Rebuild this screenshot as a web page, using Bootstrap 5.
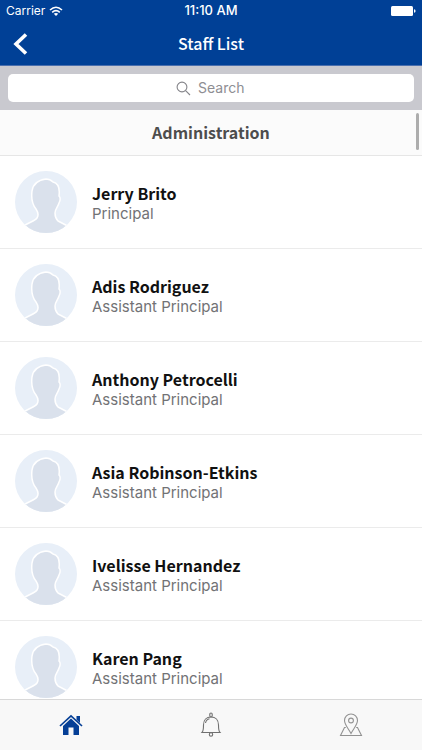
<!DOCTYPE html>
<html lang="en">
<head>
<meta charset="utf-8">
<meta name="viewport" content="width=device-width, initial-scale=1">
<title>Staff List</title>
<link rel="stylesheet" href="https://cdn.jsdelivr.net/npm/bootstrap@5.3.0/dist/css/bootstrap.min.css">
<style>
body { font-family: Inter, "Liberation Sans", sans-serif; color: #111; background: #fff; }
.humanist { font-family: "Noto Sans CJK SC", "Noto Sans", sans-serif; }
.app-top { background: #004096; border-bottom: 1px solid #4a6fae; }
.status-bar { height: 22px; font-size: 12px; padding: 0 6px; }
.status-time { font-size: 13px; font-weight: 500; }
.title-bar { height: 43px; padding: 0 12px 2px; }
.title-bar h1 { font-size: 16px; line-height: 24px; font-weight: 500; }
.back-btn { width: 16px; line-height: 0; }
.search-bar { background: #c9c9cf; padding: 8px; height: 44px; }
.search-box { height: 28px; border-radius: 5px; color: #8e8e93; gap: 7px; }
.search-box input { width: 48px; font-size: 14px; line-height: 20px; outline: 0; color: #333; -webkit-appearance: none; appearance: none; }
.search-box input::-webkit-search-cancel-button { display: none; }
.search-box input::placeholder { color: #8e8e93; opacity: 1; }
.staff-scroll { min-height: 0; scrollbar-width: none; }
.staff-scroll::-webkit-scrollbar { display: none; }
.group-title { height: 46px; padding-bottom: 2px; font-size: 16px; line-height: 24px; font-weight: 700; color: #4d4d4d; background: #fbfbfb; border-bottom: 1px solid #e6e6e6; }
.staff-row { height: 93px; padding: 0 15px; gap: 15px; border-bottom: 1px solid #ebebeb; }
.staff-row h3 { font-size: 16px; line-height: 24px; font-weight: 700; }
.staff-row p { font-size: 15px; line-height: 18px; color: #727275; font-weight: 400; }
.scroll-thumb { top: 3px; right: 3px; width: 3px; height: 37px; background: #adadad; border-radius: 2px; }
.tab-bar { height: 51px; background: #f8f8f8; border-top: 1px solid #d8d8d8; }
</style>
<script src="https://cdn.jsdelivr.net/npm/bootstrap@5.3.0/dist/js/bootstrap.bundle.min.js"></script>
</head>
<body>
<svg class="d-none" aria-hidden="true">
  <symbol id="person" viewBox="0 0 62 62">
    <rect width="62" height="62" fill="#e8eff8"/>
    <path d="M6 57C12 52 20 50 22 47C24 44 23 41 21 38C17 33 16 28 17 20C18 13 24 9 31 8C34 8 36 9 38 11C43 12 45 17 44 25C46 27 45 30 44 32C43 36 40 38 40 42C40 46 41 48 43 50C47 52 51 54 56 57V66H6Z" fill="#dae1ec" stroke="#fff" stroke-width="1.500"/>
  </symbol>
</svg>
<div class="vh-100 d-flex flex-column">
  <header class="app-top text-white flex-shrink-0">
    <div class="status-bar row g-0 align-items-center">
      <div class="col d-flex align-items-center gap-1">
        <span>Carrier</span>
        <svg width="14" height="11" viewBox="0 0 14 11" fill="none" stroke="#fff" stroke-width="1.600" aria-hidden="true"><path d="M1 4Q7-1.500 13 4M3.200 6.400Q7 3 10.800 6.400"/><path d="M4.800 7.800Q7 6 9.200 7.800L7 10Z" fill="#fff" stroke="none"/></svg>
      </div>
      <div class="col-auto status-time">11:10 AM</div>
      <div class="col d-flex justify-content-end">
        <svg width="25" height="10" viewBox="0 0 25 10" fill="#fff" aria-hidden="true"><rect width="22" height="10" rx="1.500"/><path d="M23 3.300q1.600.2 1.600 1.700T23 6.700Z"/></svg>
      </div>
    </div>
    <div class="title-bar row g-0 align-items-center">
      <div class="col">
        <button class="back-btn btn p-0 border-0 text-white" type="button" aria-label="Back">
          <svg width="15" height="22" viewBox="0 0 15 22" fill="none" stroke="#fff" stroke-width="3.600"><path d="M13 1.500L3 11L13 20.500"/></svg>
        </button>
      </div>
      <h1 class="col-auto humanist mb-0">Staff List</h1>
      <div class="col"></div>
    </div>
  </header>
  <div class="search-bar flex-shrink-0">
    <label class="search-box bg-white d-flex align-items-center justify-content-center">
      <svg width="15" height="15" viewBox="0 0 15 15" fill="none" stroke="#85858a" stroke-width="1.100" aria-hidden="true"><circle cx="6" cy="6" r="4.900"/><path d="M9.600 9.600L14 14"/></svg>
      <input class="border-0 p-0 bg-transparent" type="search" placeholder="Search" aria-label="Search">
    </label>
  </div>
  <div class="position-relative flex-fill d-flex staff-scroll">
    <main class="staff-scroll flex-fill overflow-auto">
      <h2 class="group-title humanist mb-0 d-flex align-items-center justify-content-center">Administration</h2>
      <ul class="list-unstyled mb-0">
        <li class="staff-row d-flex align-items-center"><svg class="rounded-circle" width="62" height="62" aria-hidden="true"><use href="#person"/></svg><div><h3 class="humanist mb-0">Jerry Brito</h3><p class="mb-0">Principal</p></div></li>
        <li class="staff-row d-flex align-items-center"><svg class="rounded-circle" width="62" height="62" aria-hidden="true"><use href="#person"/></svg><div><h3 class="humanist mb-0">Adis Rodriguez</h3><p class="mb-0">Assistant Principal</p></div></li>
        <li class="staff-row d-flex align-items-center"><svg class="rounded-circle" width="62" height="62" aria-hidden="true"><use href="#person"/></svg><div><h3 class="humanist mb-0">Anthony Petrocelli</h3><p class="mb-0">Assistant Principal</p></div></li>
        <li class="staff-row d-flex align-items-center"><svg class="rounded-circle" width="62" height="62" aria-hidden="true"><use href="#person"/></svg><div><h3 class="humanist mb-0">Asia Robinson-Etkins</h3><p class="mb-0">Assistant Principal</p></div></li>
        <li class="staff-row d-flex align-items-center"><svg class="rounded-circle" width="62" height="62" aria-hidden="true"><use href="#person"/></svg><div><h3 class="humanist mb-0">Ivelisse Hernandez</h3><p class="mb-0">Assistant Principal</p></div></li>
        <li class="staff-row d-flex align-items-center"><svg class="rounded-circle" width="62" height="62" aria-hidden="true"><use href="#person"/></svg><div><h3 class="humanist mb-0">Karen Pang</h3><p class="mb-0">Assistant Principal</p></div></li>
      </ul>
    </main>
    <div class="scroll-thumb position-absolute"></div>
  </div>
  <nav class="tab-bar nav nav-fill flex-shrink-0 align-items-center" aria-label="Main">
    <a class="nav-item d-flex justify-content-center" href="#home" aria-label="Home">
      <svg width="24" height="22" viewBox="0 0 24 22" fill="#053f96"><path d="M12 4.500L20 12V21H14.500V13.500H9.500V21H4V12Z"/><path d="M1 12L12 1.800L23 12" fill="none" stroke="#053f96" stroke-width="1.700"/><path d="M17.500 2H21V9L17.500 5.800Z"/></svg>
    </a>
    <a class="nav-item d-flex justify-content-center" href="#alerts" aria-label="Alerts">
      <svg width="22" height="26" viewBox="0 0 22 26" fill="none" stroke="#707070" stroke-width="1.100"><path d="M2 20.500C3.500 19 3.500 17 3.500 13C3.500 8 6.500 5 11 5S18.500 8 18.500 13C18.500 17 18.500 19 20 20.500Z"/><rect x="9.800" y="1" width="2.400" height="4" rx="1.200"/><circle cx="11" cy="22.500" r="1.700"/><path d="M5.500 11C6 8.500 7.500 7.200 9.500 6.800"/></svg>
    </a>
    <a class="nav-item d-flex justify-content-center" href="#map" aria-label="Map">
      <svg width="24" height="26" viewBox="0 0 24 26" fill="none" stroke="#929292" stroke-width="1.100"><path d="M12 21.500C9 16 5.500 12.500 5.500 8.500A6.500 6.500 0 0 1 18.500 8.500C18.500 12.500 15 16 12 21.500Z"/><circle cx="12" cy="8.500" r="2.400"/><path d="M6.800 15.500H5.500L1.500 23.500H22.500L18.500 15.500H17.200"/></svg>
    </a>
  </nav>
</div>
</body>
</html>
